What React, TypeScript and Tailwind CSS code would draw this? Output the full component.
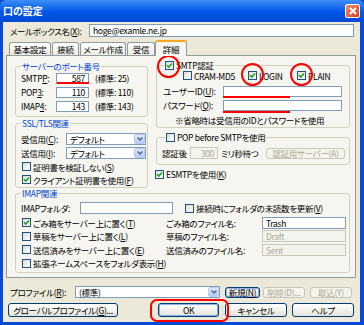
import React from "react";

function M({ c }: { c: string }) {
  return <span className="underline decoration-[0.5px] underline-offset-[1px]">{c}</span>;
}

function Check({ on = false }: { on?: boolean }) {
  return (
    <span className="flex h-[9px] w-[9px] shrink-0 items-center justify-center border border-[#1c5180] bg-linear-to-br from-[#dcdcd4] to-white">
      {on && (
        <svg width="7" height="7" viewBox="0 0 7 7">
          <path d="M1 3.3 L2.8 5.1 L6 1.5" stroke="#21a121" strokeWidth="1.6" fill="none" />
        </svg>
      )}
    </span>
  );
}

function Edit({
  className = "",
  value = "",
  right = false,
  disabled = false,
}: {
  className?: string;
  value?: string;
  right?: boolean;
  disabled?: boolean;
}) {
  return (
    <div
      className={`flex shrink-0 items-center border px-[3px] leading-none ${
        disabled ? "border-[#c9c7ba] bg-[#f4f3ee] text-[#aca899]" : "border-[#7f9db9] bg-white text-black"
      } ${right ? "justify-end" : ""} ${className}`}
    >
      {value}
    </div>
  );
}

function Combo({ className = "", value = "" }: { className?: string; value?: string }) {
  return (
    <div className={`flex shrink-0 items-stretch border border-[#7f9db9] bg-white ${className}`}>
      <span className="flex flex-1 items-center pl-[3px] leading-none">{value}</span>
      <span className="flex w-[11px] items-center justify-center rounded-[2px] border border-[#b9cbf3] bg-linear-to-b from-[#e0e9fe] to-[#b6cbf7]">
        <svg width="6" height="4" viewBox="0 0 6 4">
          <path d="M0.6 0.6 L3 3 L5.4 0.6" stroke="#4d6185" strokeWidth="1.4" fill="none" />
        </svg>
      </span>
    </div>
  );
}

function Btn({
  className = "",
  children,
  disabled = false,
  def = false,
}: {
  className?: string;
  children: React.ReactNode;
  disabled?: boolean;
  def?: boolean;
}) {
  return (
    <div
      className={`flex shrink-0 items-center justify-center rounded-[3px] border leading-none ${
        disabled
          ? "border-[#c9c7ba] bg-[#f5f4ea] text-[#aca899]"
          : "border-[#003c74] bg-linear-to-b from-white to-[#e6e4d9] text-black"
      } ${def ? "shadow-[inset_0_0_0_1px_#8fb1ec]" : ""} ${className}`}
    >
      {children}
    </div>
  );
}

function Group({
  className = "",
  title,
  children,
  legendClass = "ml-[5px]",
}: {
  className?: string;
  title: React.ReactNode;
  children: React.ReactNode;
  legendClass?: string;
}) {
  return (
    <fieldset className={`rounded-[3px] border border-[#d0d0bf] ${className}`}>
      <legend className={`px-[1px] leading-[10px] text-[#0046d5] ${legendClass}`}>{title}</legend>
      {children}
    </fieldset>
  );
}

function Tab({ label, w, active = false }: { label: string; w: string; active?: boolean }) {
  return (
    <div
      className={`flex items-center justify-center rounded-t-[3px] border border-b-0 border-[#919b9c] leading-none ${w} ${
        active
          ? "relative z-10 -mb-[1px] -ml-[1px] h-[16px] border-t-2 border-t-[#f5a623] bg-[#f6f5f0]"
          : "h-[13px] bg-linear-to-b from-white to-[#ecebe5]"
      }`}
    >
      {label}
    </div>
  );
}

export default function App() {
  return (
    <div className="relative h-[325px] w-[364px] overflow-hidden whitespace-nowrap bg-[#0a4bd6] font-['Noto_Sans_CJK_JP','Noto_Sans',sans-serif] text-[8.5px] leading-[10px] tracking-[-0.3px] text-black [font-feature-settings:'palt']">
      {/* title bar */}
      <div className="flex h-[22px] items-center rounded-t-[6px] bg-linear-to-b from-[#3c8ef8] via-[#0458e8] to-[#0349d4] pl-[3px] pr-[4px]">
        <span className="text-[10px] font-bold leading-none tracking-normal text-white">口の設定</span>
        <div className="ml-auto flex h-[14px] w-[15px] items-center justify-center rounded-[2px] border border-white bg-linear-to-br from-[#f08a6a] to-[#d2401c]">
          <svg width="8" height="8" viewBox="0 0 8 8">
            <path d="M1 1 L7 7 M7 1 L1 7" stroke="white" strokeWidth="1.8" />
          </svg>
        </div>
      </div>

      {/* body */}
      <div className="ml-[3px] flex h-[300px] w-[357px] flex-col bg-[#ece9d8]">
        {/* mailbox row */}
        <div className="mt-[2px] flex h-[13px] items-center pl-[7px]">
          <span className="w-[79px]">
            メールボックス名(<M c="X" />):
          </span>
          <Edit className="h-[13px] w-[265px]" value="hoge@examle.ne.jp" />
        </div>

        {/* tabs */}
        <div className="mt-[3px] flex h-[15px] items-end gap-[1px] pl-[6px]">
          <Tab label="基本設定" w="w-[42px]" />
          <Tab label="接続" w="w-[27px]" />
          <Tab label="メール作成" w="w-[46px]" />
          <Tab label="受信" w="w-[28px]" />
          <Tab label="詳細" w="w-[32px]" active />
        </div>

        {/* tab panel */}
        <div className="ml-[3px] h-[223px] w-[350px] shrink-0 border border-[#919b9c] bg-[#f6f5f0]">
          <div className="flex items-start">
            {/* left column */}
            <div className="ml-[8px] w-[133px] pt-[5px]">
              <Group title="サーバーのポート番号" className="w-[133px] pb-[3px]">
                {[
                  ["SMTP", "P", "587", "25"],
                  ["POP", "3", "110", "110"],
                  ["IMAP", "4", "143", "143"],
                ].map(([a, b, v, s]) => (
                  <div key={a} className="flex h-[14px] items-center pl-[5px]">
                    <span className="w-[35px]">
                      {a}
                      <M c={b} />:
                    </span>
                    <Edit className="h-[11px] w-[33px]" value={v} right />
                    <span className="ml-[6px]">(標準: {s})</span>
                  </div>
                ))}
              </Group>

              <Group title="SSL/TLS関連" className="mt-[1px] w-[133px] pb-[1px] pt-[4px]">
                <div className="flex h-[14px] items-center pl-[5px]">
                  <span className="w-[45px]">
                    受信用(<M c="C" />):
                  </span>
                  <Combo className="h-[12px] w-[80px]" value="デフォルト" />
                </div>
                <div className="flex h-[14px] items-center pl-[5px]">
                  <span className="w-[45px]">
                    送信用(<M c="I" />):
                  </span>
                  <Combo className="h-[12px] w-[80px]" value="デフォルト" />
                </div>
                <div className="flex h-[13px] items-center gap-[2px] pl-[6px]">
                  <Check />
                  <span>
                    証明書を検証しない(<M c="S" />)
                  </span>
                </div>
                <div className="flex h-[13px] items-center gap-[2px] pl-[6px]">
                  <Check on />
                  <span>
                    クライアント証明書を使用(<M c="F" />)
                  </span>
                </div>
              </Group>
            </div>

            {/* right column */}
            <div className="ml-[8px] w-[194px] pt-[4px]">
              <Group
                className="w-[194px] pb-[2px]"
                legendClass="ml-[7px]"
                title={
                  <span className="flex items-center gap-[2px] text-black">
                    <Check on />
                    SMTP認証
                  </span>
                }
              >
                <div className="flex h-[11px] items-center pl-[26px]">
                  <span className="flex w-[65px] items-center gap-[2px]">
                    <Check />
                    CRAM-MD5
                  </span>
                  <span className="flex w-[49px] items-center gap-[2px]">
                    <Check on />
                    LOGIN
                  </span>
                  <span className="flex items-center gap-[2px]">
                    <Check on />
                    PLAIN
                  </span>
                </div>
                <div className="mt-[4px] flex h-[12px] items-center pl-[6px]">
                  <span className="w-[60px]">
                    ユーザーID(<M c="U" />):
                  </span>
                  <Edit className="h-[11px] w-[119px]" />
                </div>
                <div className="mt-[2px] flex h-[12px] items-center pl-[6px]">
                  <span className="w-[60px]">
                    パスワード(<M c="Q" />):
                  </span>
                  <Edit className="h-[11px] w-[119px]" />
                </div>
                <div className="mt-[4px] h-[10px] pl-[18px]">※省略時は受信用のIDとパスワードを使用</div>
              </Group>

              <Group
                className="mt-[4px] w-[194px] pb-[4px] pt-[4px]"
                legendClass="ml-[8px]"
                title={
                  <span className="flex items-center gap-[2px] text-black">
                    <Check />
                    POP before SMTPを使用
                  </span>
                }
              >
                <div className="flex h-[14px] items-center pl-[5px]">
                  <span className="w-[28px]">認証後</span>
                  <Edit className="h-[12px] w-[28px]" value="300" right disabled />
                  <span className="ml-[3px] w-[45px]">ミリ秒待つ</span>
                  <Btn className="h-[11px] w-[79px]" disabled>
                    認証用サーバー(A)
                  </Btn>
                </div>
              </Group>

              <div className="-ml-[1px] mt-[4px] flex h-[10px] items-center gap-[2px]">
                <Check on />
                <span>
                  ESMTPを使用(<M c="K" />)
                </span>
              </div>
            </div>
          </div>

          {/* IMAP group */}
          <Group title="IMAP関連" className="ml-[8px] w-[335px] pb-[2px]">
            <div className="mt-[3px] flex h-[14px] items-center pl-[5px]">
              <span className="w-[59px]">IMAPフォルダ:</span>
              <Edit className="h-[12px] w-[93px]" />
              <span className="ml-[12px] flex items-center gap-[2px]">
                <Check />
                <span>
                  接続時にフォルダの未読数を更新(<M c="V" />)
                </span>
              </span>
            </div>
            <div className="mt-[1px]">
              {[
                { t: "ごみ箱をサーバー上に置く", k: "T", on: true, l: "ごみ箱のファイル名:", v: "Trash", d: false },
                { t: "草稿をサーバー上に置く", k: "L", on: false, l: "草稿のファイル名:", v: "Draft", d: true },
                { t: "送信済みをサーバー上に置く", k: "E", on: false, l: "送信済みのファイル名:", v: "Sent", d: true },
                { t: "拡張ネームスペースをフォルダ表示", k: "H", on: false, l: "", v: "", d: false },
              ].map((r) => (
                <div key={r.k} className="flex h-[13.5px] items-center">
                  <span className="flex w-[150px] items-center gap-[2px] pl-[6px]">
                    <Check on={r.on} />
                    <span>
                      {r.t}(<M c={r.k} />)
                    </span>
                  </span>
                  {r.l && (
                    <>
                      <span className="w-[96px]">{r.l}</span>
                      <Edit className="h-[12px] w-[84px]" value={r.v} disabled={r.d} />
                    </>
                  )}
                </div>
              ))}
            </div>
          </Group>
        </div>

        {/* profile row */}
        <div className="mt-[8px] flex h-[12px] items-center pl-[7px]">
          <span className="w-[65px]">
            プロファイル(<M c="R" />):
          </span>
          <Combo className="h-[12px] w-[145px]" value="(標準)" />
          <Btn className="ml-[5px] h-[11px] w-[35px]" def>
            新規(<M c="N" />)
          </Btn>
          <Btn className="ml-[3px] h-[11px] w-[42px]" disabled>
            削除(D)...
          </Btn>
          <Btn className="ml-[5px] h-[11px] w-[42px]" disabled>
            取込(Y)
          </Btn>
        </div>

        {/* bottom buttons */}
        <div className="mt-[5px] flex h-[14px] items-center">
          <Btn className="ml-[5px] h-[14px] w-[110px]">
            グローバルプロファイル(<M c="G" />)...
          </Btn>
          <Btn className="ml-[40px] h-[14px] w-[61px]" def>
            OK
          </Btn>
          <Btn className="ml-[6px] h-[14px] w-[62px]">キャンセル</Btn>
          <Btn className="ml-[5px] h-[14px] w-[62px]">ヘルプ</Btn>
        </div>
      </div>

      {/* red annotations (overlay) */}
      <div className="pointer-events-none absolute left-[57px] top-[82px] h-[2px] w-[32px] bg-[#ff0000]" />
      <div className="pointer-events-none absolute left-[223px] top-[96px] h-[2px] w-[67px] bg-[#ff0000]" />
      <div className="pointer-events-none absolute left-[223px] top-[111px] h-[2px] w-[67px] bg-[#ff0000]" />
      <div className="pointer-events-none absolute left-[157px] top-[55px] h-[23px] w-[23px] rounded-full border-2 border-[#ff0000]" />
      <div className="pointer-events-none absolute left-[241px] top-[63px] h-[23px] w-[23px] rounded-full border-2 border-[#ff0000]" />
      <div className="pointer-events-none absolute left-[290px] top-[63px] h-[23px] w-[23px] rounded-full border-2 border-[#ff0000]" />
      <div className="pointer-events-none absolute left-[150px] top-[299px] h-[23px] w-[79px] rounded-[7px] border-2 border-[#ff0000]" />
    </div>
  );
}
